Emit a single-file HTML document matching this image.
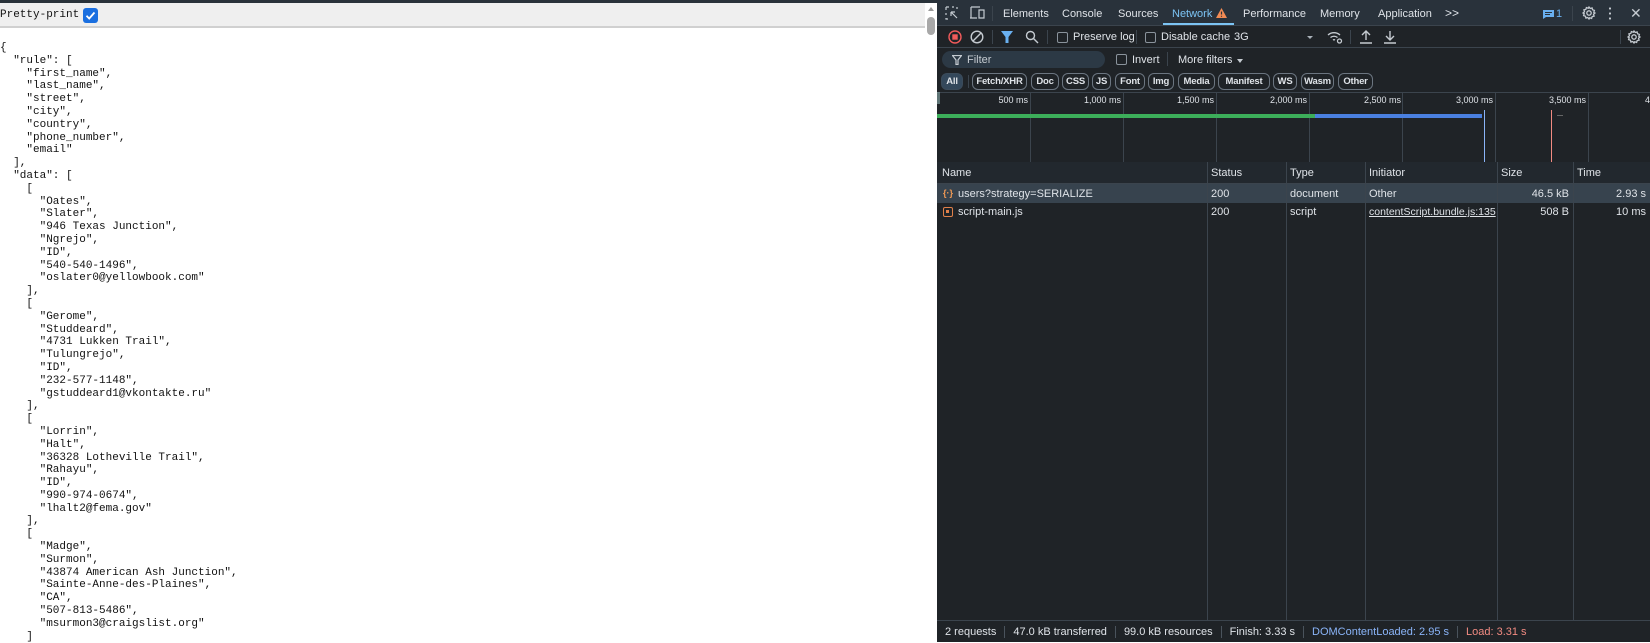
<!DOCTYPE html>
<html><head><meta charset="utf-8"><style>
*{margin:0;padding:0;box-sizing:border-box}
body{width:1650px;height:642px;overflow:hidden;background:#fff;position:relative;font-family:"Liberation Sans",sans-serif}
.topstrip{position:absolute;left:0;top:0;width:937px;height:3px;background:#29323a}
.hdr{position:absolute;left:0;top:3px;width:925px;height:25px;background:#efefef;border-bottom:2px solid #d0d0d0;font:11px "Liberation Mono",monospace;color:#111;line-height:24px}
.cb{position:absolute;left:83px;top:5px;width:15px;height:15px;background:#1a6fe0;border-radius:3px}
pre{position:absolute;left:0;top:42px;font:11px/12.8px "Liberation Mono",monospace;color:#111}
.sb{position:absolute;left:925px;top:3px;width:12px;height:639px;background:#fff}
.sb .th{position:absolute;left:2px;top:14px;width:8px;height:18px;background:#a8a8a8;border-radius:4px}
.sb .ar{position:absolute;left:3px;top:4px;width:0;height:0;border-left:3px solid transparent;border-right:3px solid transparent;border-bottom:4px solid #999}
.dt{position:absolute;left:937px;top:0;width:713px;height:642px;background:#1f2327;color:#dfe3e8;font-size:11px}
.ab{position:absolute;white-space:nowrap}
.tabs{position:absolute;left:0;top:0;width:713px;height:26px;background:#29323b;border-bottom:1px solid #3b444d}
.line{position:absolute;background:#3b444d}
.chip{position:absolute;top:73px;height:17px;border:1px solid #6b7580;border-radius:6px;font-size:9.5px;font-weight:bold;line-height:15px;text-align:center;color:#dfe3e8;letter-spacing:-0.2px}
.chk{position:absolute;width:11px;height:11px;border:1px solid #8a939c;border-radius:2px}
.tl{position:absolute;top:95px;font-size:9px;color:#dfe3e8;text-align:right;width:60px}
.gl{position:absolute;top:92px;width:1px;height:70px;background:#3b444d}
.cl{position:absolute;top:162px;width:1px;height:458px;background:#3b444d}
.th2{position:absolute;top:162px;left:0;width:713px;height:22px;background:#22282e;border-bottom:1px solid #3b444d}
.cell{position:absolute;font-size:11px;white-space:nowrap}
.foot{position:absolute;left:0;top:620px;width:713px;height:22px;border-top:1px solid #3b444d;font-size:11px;line-height:22px;color:#dfe3e8}
.foot span{display:inline-block;padding:0 8px;border-right:1px solid #4a535c;line-height:12px}
</style></head><body>
<div class="topstrip"></div>
<div class="hdr">Pretty-print<div class="cb"><svg width="15" height="15" viewBox="0 0 15 15"><path d="M3.5 7.8l2.7 2.7 5.3-6" stroke="#fff" stroke-width="1.8" fill="none"/></svg></div></div>
<pre>{
  "rule": [
    "first_name",
    "last_name",
    "street",
    "city",
    "country",
    "phone_number",
    "email"
  ],
  "data": [
    [
      "Oates",
      "Slater",
      "946 Texas Junction",
      "Ngrejo",
      "ID",
      "540-540-1496",
      "oslater0@yellowbook.com"
    ],
    [
      "Gerome",
      "Studdeard",
      "4731 Lukken Trail",
      "Tulungrejo",
      "ID",
      "232-577-1148",
      "gstuddeard1@vkontakte.ru"
    ],
    [
      "Lorrin",
      "Halt",
      "36328 Lotheville Trail",
      "Rahayu",
      "ID",
      "990-974-0674",
      "lhalt2@fema.gov"
    ],
    [
      "Madge",
      "Surmon",
      "43874 American Ash Junction",
      "Sainte-Anne-des-Plaines",
      "CA",
      "507-813-5486",
      "msurmon3@craigslist.org"
    ]</pre>
<div class="sb"><div class="ar"></div><div class="th"></div></div>

<div class="dt">
 <div class="tabs">
  <svg class="ab" style="left:8px;top:6px" width="14" height="14" viewBox="0 0 14 14" fill="none" stroke="#c5cbd1" stroke-width="1.2"><path d="M1 1h3M1 1v3M1 7v2M1 12v1h2M7 1h2M12 1v2M6 6l6 6M6 6h4M6 6v4"/></svg>
  <svg class="ab" style="left:33px;top:6px" width="16" height="14" viewBox="0 0 16 14" fill="none" stroke="#c5cbd1" stroke-width="1.2"><path d="M1 1h9M1 1v11h6M0 12h7M9 4h5v8H9z"/></svg>
  <div class="line" style="left:55px;top:6px;width:1px;height:15px"></div>
  <div class="ab" style="left:66px;top:8px">Elements</div>
  <div class="ab" style="left:125px;top:8px">Console</div>
  <div class="ab" style="left:181px;top:8px">Sources</div>
  <div class="ab" style="left:235px;top:8px;color:#7cc4f4">Network</div>
  <svg class="ab" style="left:279px;top:8px" width="11" height="10" viewBox="0 0 11 10"><path d="M5.5 0L11 10H0z" fill="#f28b54"/><path d="M5.5 3.5v3M5.5 7.7v1" stroke="#29323b" stroke-width="1.2"/></svg>
  <div class="ab" style="left:226px;top:23px;width:71px;height:2px;background:#7cc4f4"></div>
  <div class="ab" style="left:306px;top:8px">Performance</div>
  <div class="ab" style="left:383px;top:8px">Memory</div>
  <div class="ab" style="left:441px;top:8px">Application</div>
  <div class="ab" style="left:508px;top:6px;font-size:12px">&gt;&gt;</div>
  <svg class="ab" style="left:606px;top:10px" width="11" height="9" viewBox="0 0 11 9"><path d="M0 0h11v7H3L0 9z" fill="#6ab0f0"/><path d="M2 2.5h7M2 4.5h5" stroke="#29323b"/></svg>
  <div class="ab" style="left:619px;top:8px;color:#6ab0f0">1</div>
  <div class="line" style="left:635px;top:6px;width:1px;height:15px"></div>
  <svg class="ab" style="left:645px;top:6px" width="14" height="14" viewBox="0 0 14 14" fill="none" stroke="#c5cbd1" stroke-width="1.3"><circle cx="7" cy="7" r="2.2"/><path d="M7 1l1.2 1.5 1.9-.6.4 1.9 1.9.6-.6 1.9L13 7l-1.5 1.2.6 1.9-1.9.4-.6 1.9-1.9-.6L7 13l-1.2-1.5-1.9.6-.4-1.9-1.9-.6.6-1.9L1 7l1.5-1.2-.6-1.9 1.9-.4.6-1.9 1.9.6z"/></svg>
  <div class="ab" style="left:672px;top:6px;width:2px;height:14px;background:radial-gradient(circle,#c5cbd1 1px,transparent 1.2px) 0 0/2px 5px"></div>
  <div class="ab" style="left:693px;top:5px;font-size:14px;color:#c5cbd1">✕</div>
 </div>
 <svg class="ab" style="left:11px;top:30px" width="14" height="14" viewBox="0 0 14 14"><circle cx="7" cy="7" r="6" fill="none" stroke="#f25b5b" stroke-width="1.4"/><rect x="4.3" y="4.3" width="5.4" height="5.4" fill="#f25b5b"/></svg>
 <svg class="ab" style="left:33px;top:30px" width="14" height="14" viewBox="0 0 14 14" fill="none" stroke="#c5cbd1" stroke-width="1.4"><circle cx="7" cy="7" r="5.8"/><path d="M3 11L11 3"/></svg>
 <div class="line" style="left:55px;top:30px;width:1px;height:14px"></div>
 <svg class="ab" style="left:64px;top:31px" width="12" height="12" viewBox="0 0 12 12"><path d="M0 0h12L7.5 6v6h-3V6z" fill="#6ab0f0"/></svg>
 <svg class="ab" style="left:88px;top:30px" width="14" height="14" viewBox="0 0 14 14" fill="none" stroke="#c5cbd1" stroke-width="1.4"><circle cx="5.5" cy="5.5" r="4"/><path d="M8.5 8.5L13 13"/></svg>
 <div class="line" style="left:110px;top:30px;width:1px;height:14px"></div>
 <div class="chk" style="left:120px;top:32px"></div><div class="ab" style="left:136px;top:31px">Preserve log</div>
 <div class="line" style="left:199px;top:30px;width:1px;height:14px"></div>
 <div class="chk" style="left:208px;top:32px"></div><div class="ab" style="left:224px;top:31px">Disable cache</div>
 <div class="ab" style="left:297px;top:31px">3G</div>
 <div class="ab" style="left:370px;top:36px;border-left:3px solid transparent;border-right:3px solid transparent;border-top:3px solid #aab2ba"></div>
 <svg class="ab" style="left:390px;top:30px" width="16" height="14" viewBox="0 0 16 14" fill="none" stroke="#c5cbd1" stroke-width="1.3"><path d="M1 5a9 9 0 0 1 12 0M3.5 7.5a5.5 5.5 0 0 1 7 0M6 10a2 2 0 0 1 2 0"/><circle cx="12.5" cy="11" r="2"/></svg>
 <div class="line" style="left:413px;top:30px;width:1px;height:14px"></div>
 <svg class="ab" style="left:423px;top:30px" width="12" height="14" viewBox="0 0 12 14" fill="none" stroke="#c5cbd1" stroke-width="1.4"><path d="M6 10V1M2 5l4-4 4 4M0 13h12"/></svg>
 <svg class="ab" style="left:447px;top:30px" width="12" height="14" viewBox="0 0 12 14" fill="none" stroke="#c5cbd1" stroke-width="1.4"><path d="M6 1v9M2 6l4 4 4-4M0 13h12"/></svg>
 <div class="line" style="left:683px;top:30px;width:1px;height:14px"></div>
 <svg class="ab" style="left:690px;top:30px" width="14" height="14" viewBox="0 0 14 14" fill="none" stroke="#c5cbd1" stroke-width="1.3"><circle cx="7" cy="7" r="2.2"/><path d="M7 1l1.2 1.5 1.9-.6.4 1.9 1.9.6-.6 1.9L13 7l-1.5 1.2.6 1.9-1.9.4-.6 1.9-1.9-.6L7 13l-1.2-1.5-1.9.6-.4-1.9-1.9-.6.6-1.9L1 7l1.5-1.2-.6-1.9 1.9-.4.6-1.9 1.9.6z"/></svg>
 <div class="line" style="left:0;top:47px;width:713px;height:1px"></div>
 <div class="ab" style="left:5px;top:51px;width:163px;height:17px;background:#2c3945;border-radius:9px"></div>
 <svg class="ab" style="left:15px;top:55px" width="10" height="10" viewBox="0 0 10 10" fill="none" stroke="#c5cbd1" stroke-width="1.2"><path d="M0.5 0.5h9L6 5v4.5H4V5z"/></svg>
 <div class="ab" style="left:30px;top:54px;color:#c5cbd1">Filter</div>
 <div class="chk" style="left:179px;top:54px"></div><div class="ab" style="left:195px;top:54px">Invert</div>
 <div class="line" style="left:230px;top:52px;width:1px;height:14px"></div>
 <div class="ab" style="left:241px;top:54px">More filters</div>
 <div class="ab" style="left:300px;top:59px;border-left:3.5px solid transparent;border-right:3.5px solid transparent;border-top:4px solid #c5cbd1"></div>
 <div class="chip" style="left:4px;width:22px;border-color:#3b4b5a;background:#34485b">All</div>
 <div class="line" style="left:31px;top:75px;width:1px;height:13px"></div>
 <div class="chip" style="left:35px;width:55px">Fetch/XHR</div>
 <div class="chip" style="left:94px;width:28px">Doc</div>
 <div class="chip" style="left:125px;width:27px">CSS</div>
 <div class="chip" style="left:155px;width:19px">JS</div>
 <div class="chip" style="left:178px;width:30px">Font</div>
 <div class="chip" style="left:211px;width:26px">Img</div>
 <div class="chip" style="left:241px;width:37px">Media</div>
 <div class="chip" style="left:281px;width:52px">Manifest</div>
 <div class="chip" style="left:336px;width:24px">WS</div>
 <div class="chip" style="left:364px;width:33px">Wasm</div>
 <div class="chip" style="left:401px;width:35px">Other</div>
 <div class="line" style="left:0;top:92px;width:713px;height:1px"></div>
 <div class="ab" style="left:0;top:92px;width:3px;height:12px;background:#8aa;opacity:.6"></div>
 <div class="tl" style="left:31px">500 ms</div><div class="gl" style="left:93px"></div>
 <div class="tl" style="left:124px">1,000 ms</div><div class="gl" style="left:186px"></div>
 <div class="tl" style="left:217px">1,500 ms</div><div class="gl" style="left:279px"></div>
 <div class="tl" style="left:310px">2,000 ms</div><div class="gl" style="left:372px"></div>
 <div class="tl" style="left:404px">2,500 ms</div><div class="gl" style="left:465px"></div>
 <div class="tl" style="left:496px">3,000 ms</div><div class="gl" style="left:558px"></div>
 <div class="tl" style="left:589px">3,500 ms</div><div class="gl" style="left:651px"></div>
 <div class="ab" style="left:708px;top:95px;font-size:9px">4</div>
 <div class="ab" style="left:0;top:114px;width:378px;height:4px;background:#3cae5a"></div>
 <div class="ab" style="left:378px;top:114px;width:167px;height:4px;background:#4a80e0"></div>
 <div class="ab" style="left:547px;top:110px;width:1px;height:52px;background:#8ab4f8"></div>
 <div class="ab" style="left:614px;top:110px;width:1px;height:52px;background:#f28b82"></div>
 <div class="ab" style="left:620px;top:115px;width:6px;height:1px;background:#666"></div>
 <div class="th2"></div>
 <div class="ab" style="left:0;top:184px;width:713px;height:19px;background:#37434e"></div>
 <div class="cl" style="left:270px"></div><div class="cl" style="left:349px"></div><div class="cl" style="left:428px"></div><div class="cl" style="left:560px"></div><div class="cl" style="left:636px"></div>
 <div class="cell" style="left:5px;top:167px">Name</div>
 <div class="cell" style="left:274px;top:167px">Status</div>
 <div class="cell" style="left:353px;top:167px">Type</div>
 <div class="cell" style="left:432px;top:167px">Initiator</div>
 <div class="cell" style="left:564px;top:167px">Size</div>
 <div class="cell" style="left:640px;top:167px">Time</div>
 <div class="cell" style="left:6px;top:188px;color:#f29a54;font-size:9px;font-weight:bold">{·}</div>
 <div class="cell" style="left:21px;top:188px">users?strategy=SERIALIZE</div>
 <div class="cell" style="left:274px;top:188px">200</div>
 <div class="cell" style="left:353px;top:188px">document</div>
 <div class="cell" style="left:432px;top:188px">Other</div>
 <div class="cell" style="left:564px;top:188px;width:68px;text-align:right">46.5 kB</div>
 <div class="cell" style="left:640px;top:188px;width:69px;text-align:right">2.93 s</div>
 <div class="ab" style="left:6px;top:207px;width:10px;height:10px;border:1.5px solid #e0804a;border-radius:2px"><div style="margin:2px;width:3px;height:3px;background:#e0804a"></div></div>
 <div class="cell" style="left:21px;top:206px">script-main.js</div>
 <div class="cell" style="left:274px;top:206px">200</div>
 <div class="cell" style="left:353px;top:206px">script</div>
 <div class="cell" style="left:432px;top:206px;text-decoration:underline;font-size:10.5px">contentScript.bundle.js:135</div>
 <div class="cell" style="left:564px;top:206px;width:68px;text-align:right">508 B</div>
 <div class="cell" style="left:640px;top:206px;width:69px;text-align:right">10 ms</div>
 <div class="foot"><span>2 requests</span><span>47.0 kB transferred</span><span>99.0 kB resources</span><span>Finish: 3.33 s</span><span style="color:#8ab4f8">DOMContentLoaded: 2.95 s</span><span style="color:#f28b82;border:none">Load: 3.31 s</span></div>
</div>
</body></html>
